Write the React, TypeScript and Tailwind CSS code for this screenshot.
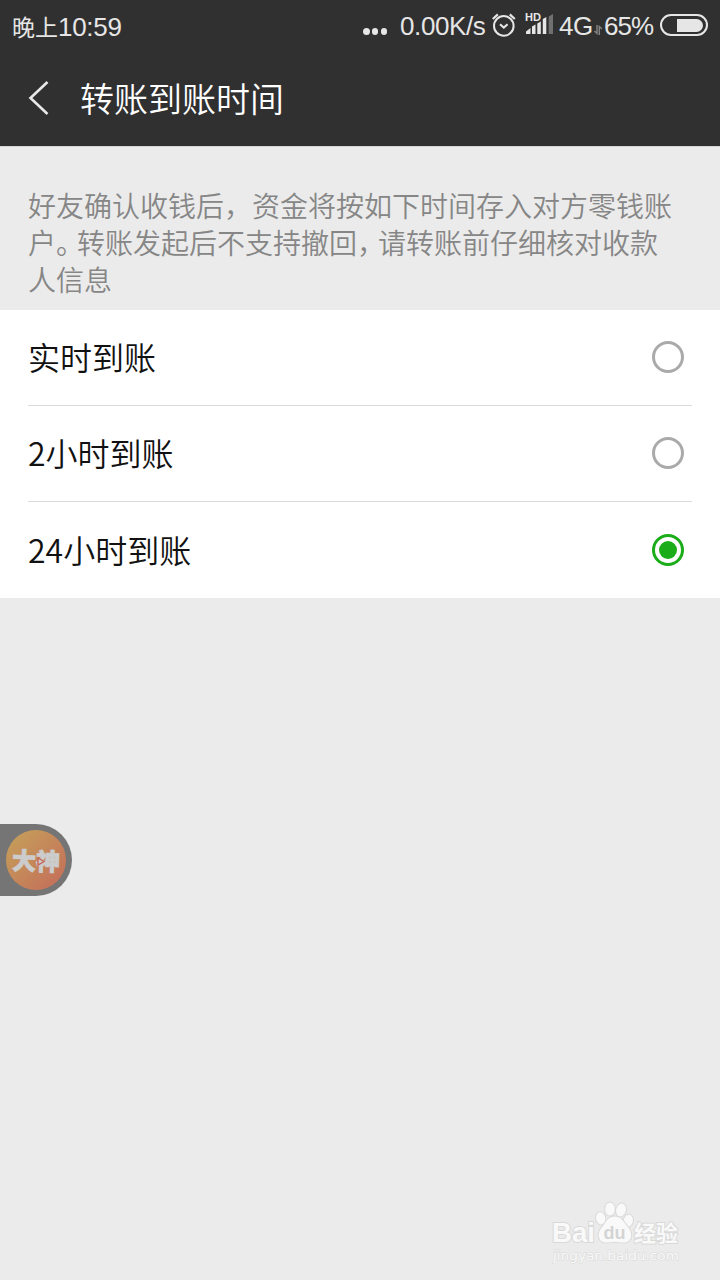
import { useState } from "react";
import clsx from "clsx";

const options = ["实时到账", "2小时到账", "24小时到账"];

const AlarmIcon = () => (
  <svg className="ml-[6px] h-[26px] w-6 shrink-0" viewBox="0 0 24 26" fill="none" stroke="#e6e6e6">
    <circle cx="11.8" cy="13.9" r="9.8" strokeWidth="2" />
    <path d="M.8 7 5.8 2.4M22.8 7 17.8 2.4" strokeWidth="2.2" />
    <path d="m8 12.2 3.8 3.4 3.8-3.4" strokeWidth="2" />
  </svg>
);

const SignalIcon = () => (
  <svg className="ml-[9px] h-[26px] w-[29px] shrink-0" viewBox="0 0 29 26" fill="#e6e6e6">
    <text
      x="0"
      y="9"
      fontFamily="Liberation Sans, sans-serif"
      fontSize="10.5"
      fontWeight="700"
      textLength="16"
      lengthAdjust="spacingAndGlyphs"
    >
      HD
    </text>
    <path d="M1 22v-2.5L5.5 16v6zM7 14.5l3.5-2V22H7zM12.3 11.5l3.5-2V22h-3.5zM17.8 7.1l3.5-2V22h-3.5z" />
    <path d="m23.7 4.6 4.3-2.6V22h-4.3z" fill="#707070" />
  </svg>
);

const StatusBar = () => (
  <div className="flex h-[50px] items-center text-[26px] leading-[50px] text-[#e6e6e6]">
    <div className="ml-3 w-[350px] shrink-0 pt-[3px] text-[26px]">
      <span className="font-['Noto_Sans_CJK_SC',sans-serif] text-[23px]">晚上</span>
      <span className="tracking-[-0.3px]">10:59</span>
    </div>
    <div className="mt-[13px] ml-[1px] flex w-[24px] shrink-0 justify-between">
      <i className="size-[6.5px] rounded-full bg-[#e6e6e6]" />
      <i className="size-[6.5px] rounded-full bg-[#e6e6e6]" />
      <i className="size-[6.5px] rounded-full bg-[#e6e6e6]" />
    </div>
    <span className="ml-[13px] w-[86px] shrink-0 pt-[2px] tracking-[-0.4px]">0.00K/s</span>
    <AlarmIcon />
    <SignalIcon />
    <span className="ml-[5px] w-[35px] shrink-0 pt-[2px] tracking-[-0.5px]">4G</span>
    <svg className="mt-[9px] h-[10px] w-[8px] shrink-0" viewBox="0 0 8 10" fill="none" stroke="#858585" strokeWidth="1.4">
      <path d="M3 0v8.5L.5 6M5.3 10V1.5L8 4" />
    </svg>
    <span className="ml-[2px] w-[51px] shrink-0 pt-[2px] tracking-[-1px]">65%</span>
    <div className="ml-[5px] flex h-[22px] w-12 shrink-0 items-center justify-end rounded-full border-2 border-[#e6e6e6] pr-[3px]">
      <div className="h-[13px] w-[26px] rounded-l-[1px] rounded-r-full bg-[#e6e6e6]" />
    </div>
  </div>
);

const Header = () => (
  <header className="h-[147px] border-b border-[#d5d5d5] bg-[#303030]">
    <StatusBar />
    <div className="flex h-24 items-center">
      <svg className="ml-7 h-9 w-[22px]" viewBox="0 0 22 36" fill="none" stroke="#e8e8e8" strokeWidth="2.6">
        <path d="M19.5 2 2.5 18l17 16" />
      </svg>
      <h1 className="ml-[30px] font-['Noto_Sans_CJK_SC',sans-serif] text-[34px] leading-[48px] font-[350] text-white">
        转账到账时间
      </h1>
    </div>
  </header>
);

interface OptionProps {
  label: string;
  checked: boolean;
  last: boolean;
  onSelect: () => void;
}

const Option = ({ label, checked, last, onSelect }: OptionProps) => (
  <button
    role="radio"
    aria-checked={checked}
    onClick={onSelect}
    className={clsx("flex h-24 w-full items-center justify-between pr-2", !last && "border-b border-[#d9d9d9] pb-px")}
  >
    <span className="pb-[2px] text-[32px] leading-[48px] font-[350] text-[#111]">{label}</span>
    <span
      className={clsx(
        "flex size-8 items-center justify-center rounded-full border-[3px]",
        checked ? "border-[#1aad19]" : "border-[#aaa]",
      )}
    >
      {checked && <span className="size-[18px] rounded-full bg-[#1aad19]" />}
    </span>
  </button>
);

// recorder handle docked to the left edge of the screen
const FloatingButton = () => (
  <div className="absolute top-[824px] left-0 flex h-[72px] w-[72px] items-center rounded-r-full bg-[#757575] pl-[6px]">
    <div className="relative flex size-[60px] items-center justify-center rounded-full bg-linear-to-br from-[#c4a259] to-[#c36a59]">
      <span className="mt-[3px] rotate-2 text-[24px] leading-none font-black text-[#cccccc] [-webkit-text-stroke:0.8px_#ccc]">
        大神
      </span>
      <svg className="absolute top-[27px] left-[31px] h-[9px] w-[8px]" viewBox="0 0 8 9" fill="#ccc" stroke="#c66657" strokeWidth="1.4">
        <path d="M1 1v7l6-3.5z" />
      </svg>
    </div>
  </div>
);

const Watermark = () => (
  <svg
    className="absolute top-[1196px] left-[546px] h-[72px] w-[142px]"
    viewBox="0 0 142 72"
    fill="#f9f9f9"
    stroke="#d9d9d9"
    strokeWidth="2"
    paintOrder="stroke"
    fontFamily="Liberation Sans, sans-serif"
  >
    <text x="6" y="46" fontSize="28" fontWeight="700" textLength="43" lengthAdjust="spacingAndGlyphs">
      Bai
    </text>
    <ellipse cx="54.7" cy="22.3" rx="4.6" ry="6.2" transform="rotate(-10 54.7 22.3)" />
    <ellipse cx="64" cy="13" rx="4.8" ry="6.6" />
    <ellipse cx="75" cy="14" rx="4.8" ry="6.6" transform="rotate(14 75 14)" />
    <ellipse cx="82.3" cy="24.8" rx="4.6" ry="6.2" transform="rotate(12 82.3 24.8)" />
    <path d="M68.7 20.5c-6 0-8 4-11 8.5-3 3.5-5 6-5 10 0 5 3 7.5 8 7.5 4 0 5-.8 8-.8s5 .8 8.5.8c5 0 8-2.5 8-7.5 0-4-2-6.5-5-10-3.5-4.5-5.5-8.5-11.5-8.5z" />
    <text x="57.5" y="43" fontSize="18" fontWeight="700" fill="#d4d4d4" stroke="none" textLength="22">
      du
    </text>
    <text x="88" y="44.5" fontSize="22" fontWeight="700" fontFamily="Noto Sans CJK SC, sans-serif" textLength="44">
      经验
    </text>
    <text x="7" y="63.5" fontSize="13" strokeWidth="1" fontFamily="DejaVu Sans, sans-serif" textLength="126" lengthAdjust="spacingAndGlyphs">
      jingyan.baidu.com
    </text>
  </svg>
);

const App = () => {
  const [selected, setSelected] = useState(2);

  return (
    <main className="relative h-[1280px] w-[720px] overflow-hidden bg-[#ebebeb] font-['Liberation_Sans','Noto_Sans_CJK_SC',sans-serif]">
      <Header />
      <p className="h-[163px] pt-[40px] pl-7 font-['Noto_Sans_CJK_SC',sans-serif] text-[28px] leading-[37px] font-[350] whitespace-nowrap text-[#868686]">
        好友确认收钱后，资金将按如下时间存入对方零钱账
        <br />户<span className="tracking-[-7px]">。</span>转账发起后不支持撤回<span className="tracking-[-7px]">，</span>
        请转账前仔细核对收款
        <br />
        人信息
      </p>
      <section role="radiogroup" className="bg-white px-7 font-['Noto_Sans_CJK_SC',sans-serif]">
        {options.map((label, i) => (
          <Option
            key={label}
            label={label}
            checked={selected === i}
            last={i === options.length - 1}
            onSelect={() => setSelected(i)}
          />
        ))}
      </section>
      <FloatingButton />
      <Watermark />
    </main>
  );
};

export default App;
